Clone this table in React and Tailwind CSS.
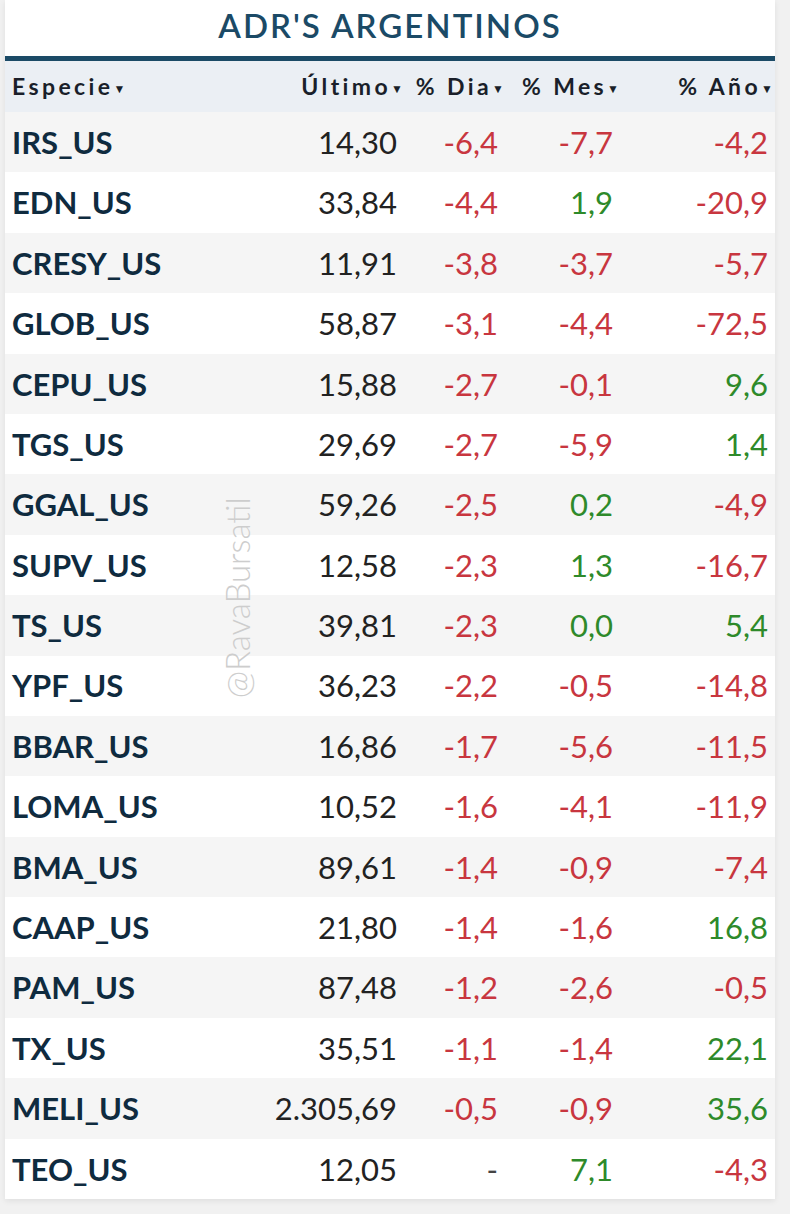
const rows = [
  ["IRS_US", "14,30", "-6,4", "-7,7", "-4,2"],
  ["EDN_US", "33,84", "-4,4", "1,9", "-20,9"],
  ["CRESY_US", "11,91", "-3,8", "-3,7", "-5,7"],
  ["GLOB_US", "58,87", "-3,1", "-4,4", "-72,5"],
  ["CEPU_US", "15,88", "-2,7", "-0,1", "9,6"],
  ["TGS_US", "29,69", "-2,7", "-5,9", "1,4"],
  ["GGAL_US", "59,26", "-2,5", "0,2", "-4,9"],
  ["SUPV_US", "12,58", "-2,3", "1,3", "-16,7"],
  ["TS_US", "39,81", "-2,3", "0,0", "5,4"],
  ["YPF_US", "36,23", "-2,2", "-0,5", "-14,8"],
  ["BBAR_US", "16,86", "-1,7", "-5,6", "-11,5"],
  ["LOMA_US", "10,52", "-1,6", "-4,1", "-11,9"],
  ["BMA_US", "89,61", "-1,4", "-0,9", "-7,4"],
  ["CAAP_US", "21,80", "-1,4", "-1,6", "16,8"],
  ["PAM_US", "87,48", "-1,2", "-2,6", "-0,5"],
  ["TX_US", "35,51", "-1,1", "-1,4", "22,1"],
  ["MELI_US", "2.305,69", "-0,5", "-0,9", "35,6"],
  ["TEO_US", "12,05", "-", "7,1", "-4,3"],
];

function color(v) {
  if (v === "-") return "text-[#444]";
  return v.startsWith("-") ? "text-[#c8363f]" : "text-[#2e8a2a]";
}

function Head({ label, className }) {
  return (
    <div className={className + " whitespace-nowrap"}>
      {label}
      <span className="text-[12px] align-middle tracking-normal">▼</span>
    </div>
  );
}

const cols = "grid grid-cols-[230px_168px_101px_115px_1fr]";

export default function App() {
  return (
    <div
      className="min-h-[1214px] bg-[#f1f1f1] pl-[5px] pr-[15px]"
      style={{ fontFamily: "Lato, 'Open Sans', sans-serif" }}
    >
      <div className="relative bg-white shadow-[0_2px_6px_rgba(0,0,0,0.08)]">
        <div className="h-[56px] flex items-center justify-center pb-[6px]">
          <h1 className="text-[33px] font-semibold tracking-[2px] text-[#1b4a66] leading-none">
            ADR'S ARGENTINOS
          </h1>
        </div>
        <div className="h-[5px] bg-[#1b4a66]" />

        <div className={cols + " h-[51px] items-center bg-[#ebeff4] text-[23px] font-bold tracking-[3.4px] text-[#1a1f2a]"}>
          <Head label="Especie" className="pl-[7px]" />
          <Head label="Último" className="text-right" />
          <Head label="% Dia" className="text-right" />
          <Head label="% Mes" className="text-right" />
          <Head label="% Año" className="text-right pr-[2px]" />
        </div>

        {rows.map((r, i) => (
          <div
            key={r[0]}
            className={
              cols +
              " h-[60.4px] items-center text-[31px] " +
              (i % 2 === 0 ? "bg-[#f5f5f5]" : "bg-white")
            }
          >
            <div className="pl-[7px] font-bold text-[#0f2b3f] whitespace-nowrap">{r[0]}</div>
            <div className="text-right pr-[6px] text-[#222]">{r[1]}</div>
            <div className={"text-right pr-[6px] " + color(r[2])}>{r[2]}</div>
            <div className={"text-right pr-[6px] " + color(r[3])}>{r[3]}</div>
            <div className={"text-right pr-[7px] " + color(r[4])}>{r[4]}</div>
          </div>
        ))}

        <div className="absolute left-[216px] top-[490px] w-[34px] h-[215px] flex items-center justify-center pointer-events-none">
          <span className="block -rotate-90 whitespace-nowrap text-[33px] font-light text-[#cdcdcd]">
            @RavaBursatil
          </span>
        </div>
      </div>
    </div>
  );
}
